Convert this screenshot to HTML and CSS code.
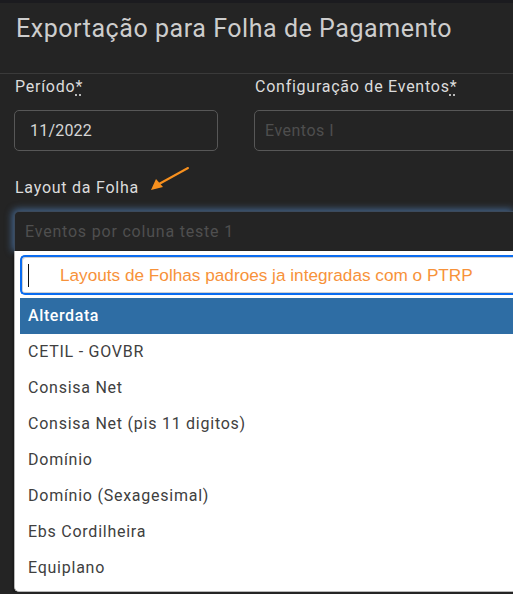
FILE: index.html
```html
<!DOCTYPE html>
<html lang="pt-BR">
<head>
<meta charset="utf-8">
<title>Exportação para Folha de Pagamento</title>
<link rel="stylesheet" href="styles.css">
</head>
<body>
<div class="modal">
  <header class="modal-header">
    <h1 class="modal-title">Exportação para Folha de Pagamento</h1>
  </header>
  <div class="modal-body">
    <div class="row">
      <div class="col col-periodo">
        <label class="field-label">Período<abbr class="req" title="obrigatório">*</abbr></label>
        <div class="input"><span class="input-value">11/2022</span></div>
      </div>
      <div class="col col-eventos">
        <label class="field-label">Configuração de Eventos<abbr class="req" title="obrigatório">*</abbr></label>
        <div class="input"><span class="input-placeholder">Eventos I</span></div>
      </div>
    </div>
    <div class="layout-field">
      <label class="field-label layout-label">Layout da Folha</label>
      <svg class="annot-arrow" width="60" height="40" viewBox="0 0 60 40" aria-hidden="true">
        <line x1="50" y1="3" x2="21" y2="19" stroke="#f7901e" stroke-width="2" stroke-linecap="round"/>
        <polygon points="13,25 18,14 25,22" fill="#f7901e"/>
      </svg>
      <div class="select-box"><span class="select-placeholder">Eventos por coluna teste 1</span></div>
      <div class="dropdown">
        <div class="search">
          <span class="caret"></span>
          <span class="search-note">Layouts de Folhas padroes ja integradas com o PTRP</span>
        </div>
        <ul class="options">
          <li class="option active">Alterdata</li>
          <li class="option">CETIL - GOVBR</li>
          <li class="option">Consisa Net</li>
          <li class="option">Consisa Net (pis 11 digitos)</li>
          <li class="option">Domínio</li>
          <li class="option">Domínio (Sexagesimal)</li>
          <li class="option">Ebs Cordilheira</li>
          <li class="option">Equiplano</li>
        </ul>
      </div>
    </div>
  </div>
</div>
</body>
</html>
```

FILE: styles.css
```css
* { box-sizing: border-box; }

html, body {
  margin: 0;
  padding: 0;
  width: 513px;
  height: 594px;
  overflow: hidden;
  background: #242424;
  font-family: Roboto, "Noto Sans", "Liberation Sans", sans-serif;
}

.modal {
  width: 513px;
  overflow: hidden;
  border-top: 3px solid #1b1b1f;
}

.modal-header {
  height: 71px;
  border-bottom: 1px solid #3a3a3a;
  padding: 12px 0 0 16px;
}

.modal-title {
  margin: 0;
  font-size: 25px;
  font-weight: 400;
  line-height: 28px;
  letter-spacing: 0.55px;
  color: #cdcdcd;
  white-space: nowrap;
}

.modal-body {
  padding: 3px 0 0 14px;
}

.row {
  display: flex;
  gap: 36px;
}

.col-periodo { width: 204px; flex: none; }
.col-eventos { width: 300px; flex: none; }

.field-label {
  display: block;
  padding-left: 1px;
  font-size: 16px;
  line-height: 20px;
  letter-spacing: 0.75px;
  color: #dcdcdc;
  white-space: nowrap;
  margin-bottom: 13px;
}

.req {
  text-decoration: underline dotted;
  text-underline-offset: 3px;
}

.input {
  height: 41px;
  border: 1px solid #575757;
  border-radius: 5px;
  background: #242424;
  display: flex;
  align-items: center;
  padding-left: 15px;
  font-size: 16px;
  letter-spacing: 0.2px;
}

.input-value { color: #d6d6d6; }
.input-placeholder { color: #4e4e4e; letter-spacing: 0.5px; }
.col-eventos .input { padding-left: 10px; }

.layout-field {
  position: relative;
  margin-top: 27px;
}

.layout-label { margin-bottom: 13px; }

.annot-arrow {
  position: absolute;
  left: 124px;
  top: -13px;
}

.select-box {
  width: 499px;
  height: 40px;
  background: #242424;
  border: 1px solid #3c4a5c;
  border-bottom: none;
  border-right: none;
  border-radius: 5px 0 0 0;
  box-shadow: -1px -1px 7px 1px rgba(90, 150, 220, 0.55);
  display: flex;
  align-items: center;
  padding-left: 10px;
}

.select-placeholder {
  color: #4f4f4f;
  font-size: 16px;
  letter-spacing: 0.8px;
}

.dropdown {
  width: 499px;
  height: 341px;
  background: #ffffff;
  border-left: 1px solid #b8b8b8;
  border-bottom: 1px solid #b8b8b8;
  border-radius: 0 0 0 5px;
  padding: 4px 0 0 5px;
  box-shadow: -1px 2px 3px rgba(0, 0, 0, 0.4);
}

.search {
  height: 40px;
  border: 2px solid #0a6cf0;
  border-right: none;
  border-radius: 5px 0 0 5px;
  box-shadow: inset 1px 1px 0 0 #d0d0d0, inset 0 -1px 0 0 #d0d0d0;
  display: flex;
  align-items: center;
  padding-left: 6px;
}

.caret {
  width: 1px;
  height: 23px;
  background: #111;
  flex: none;
}

.search-note {
  margin-left: 31px;
  color: #f7923a;
  font-family: "Liberation Sans", Arial, sans-serif;
  font-size: 17.2px;
  white-space: nowrap;
}

.options {
  list-style: none;
  margin: 3px 0 0 0;
  padding: 0;
}

.option {
  height: 36px;
  line-height: 36px;
  padding-left: 8px;
  font-size: 16px;
  letter-spacing: 0.75px;
  color: #404040;
  white-space: nowrap;
}

.option.active {
  background: #2e6da4;
  color: #ffffff;
  font-weight: 500;
  letter-spacing: 0.6px;
}
```
